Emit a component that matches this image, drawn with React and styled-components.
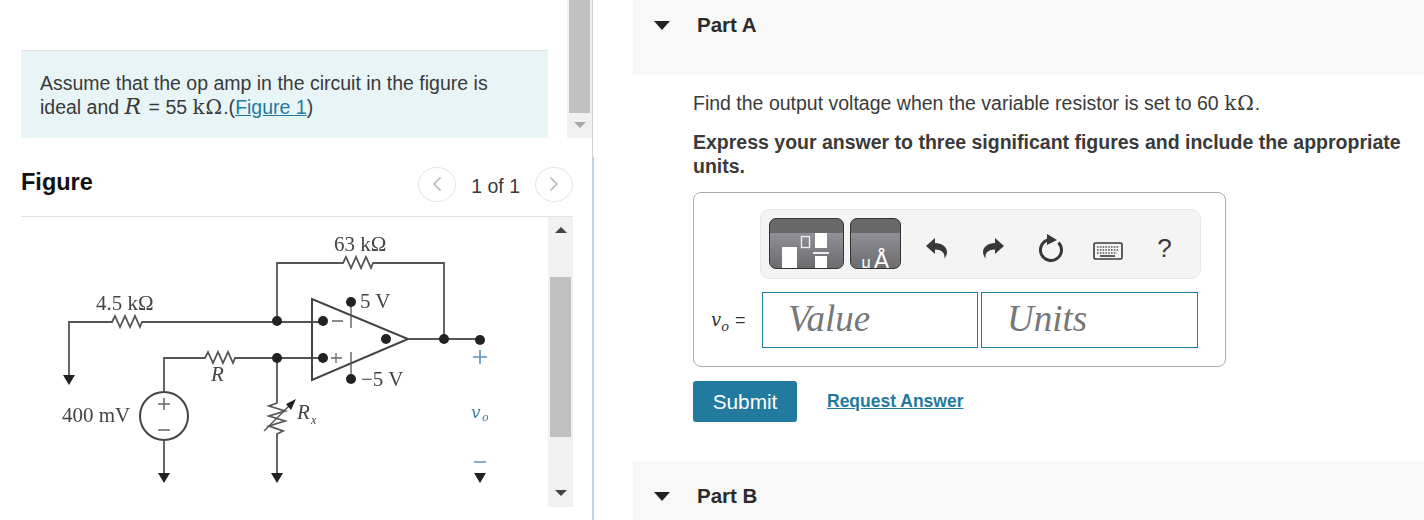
import React from 'react';
import styled, { createGlobalStyle } from 'styled-components';
import { ChevronLeft, ChevronRight } from 'lucide-react';

const GlobalStyle = createGlobalStyle`
  html, body {
    margin: 0;
    padding: 0;
    background: #fff;
  }
  body {
    font-family: "Liberation Sans", Arial, sans-serif;
    color: #333;
    overflow: hidden;
  }
`;

const Page = styled.div`
  display: flex;
  width: 1424px;
  height: 520px;
  overflow: hidden;
`;

const LeftPane = styled.div`
  display: flex;
  flex-direction: column;
  width: 594px;
  flex-shrink: 0;
`;

const TopRow = styled.div`
  display: flex;
  height: 157px;
  width: 593px;
  box-sizing: border-box;
  border-right: 1px solid #ccc;
`;

const Statement = styled.div`
  box-sizing: border-box;
  width: 528px;
  height: 88px;
  margin: 50px 19px 0 21px;
  padding: 20px 19px 0;
  background: #e8f5f6;
  border-top: 1px solid #e0e0e0;
  font-size: 19.5px;
  line-height: 24px;
  color: #3a3a3a;
`;

const Math = styled.span`
  font-family: "DejaVu Serif", "Liberation Serif", serif;
  font-size: ${(p) => p.$size || 20}px;
  line-height: 20px;
  letter-spacing: ${(p) => (p.$italic ? 2 : 1)}px;
  font-style: ${(p) => (p.$italic ? 'italic' : 'normal')};
`;

const TextLink = styled.a`
  color: #1f7a9e;
  text-decoration: underline;
  font-weight: ${(p) => (p.$bold ? 700 : 400)};
`;

const ScrollTrack = styled.div`
  display: flex;
  flex-direction: column;
  align-items: center;
  box-sizing: border-box;
  width: 25px;
  height: ${(p) => p.$height}px;
  background: #f1f1f1;
  flex-shrink: 0;
`;

const ScrollThumb = styled.div`
  width: 21px;
  height: ${(p) => p.$height}px;
  margin-top: ${(p) => p.$top || 0}px;
  background: #c1c1c1;
`;

const ScrollArrow = styled.div`
  width: 0;
  height: 0;
  border-left: 6px solid transparent;
  border-right: 6px solid transparent;
  margin-top: ${(p) => p.$top || 0}px;
  ${(p) => (p.$up ? `border-bottom: 6px solid ${p.$color};` : `border-top: 6px solid ${p.$color};`)}
`;

const FigurePane = styled.div`
  flex: 1;
  border-right: 2px solid #c3d2e4;
`;

const FigureHeader = styled.div`
  display: flex;
  align-items: center;
  box-sizing: border-box;
  height: 60px;
  width: 552px;
  margin-left: 21px;
  border-bottom: 1px solid #e2e2e2;
`;

const FigureTitle = styled.h2`
  flex: 1;
  margin: 0 0 9px;
  font-size: 23.5px;
  font-weight: 700;
  color: #111;
`;

const Pager = styled.div`
  display: flex;
  align-items: center;
  gap: 15px;
  margin-bottom: 5px;
`;

const PagerButton = styled.div`
  display: flex;
  align-items: center;
  justify-content: center;
  box-sizing: border-box;
  width: 38px;
  height: 35px;
  border: 1px solid #e6e6e6;
  border-radius: 50%;
  color: #c4c4c4;
`;

const PagerText = styled.span`
  margin-top: 4px;
  font-size: 19.5px;
  color: #3a3a3a;
`;

const FigureRow = styled.div`
  display: flex;
  margin-left: 21px;
`;

const Circuit = styled.svg`
  display: block;
  width: 527px;
  height: 290px;
  filter: blur(0.45px);
  flex-shrink: 0;
`;

const RightPane = styled.div`
  flex: 1;
  margin-left: 39px;
`;

const PartHeader = styled.div`
  display: flex;
  align-items: flex-start;
  height: ${(p) => p.$height}px;
  padding-top: ${(p) => p.$pad}px;
  box-sizing: border-box;
  background: #f8f8f8;
`;

const Caret = styled.div`
  width: 0;
  height: 0;
  margin: 8px 27px 0 21px;
  border-left: 8px solid transparent;
  border-right: 8px solid transparent;
  border-top: 9px solid #222;
`;

const PartTitle = styled.div`
  font-size: 20.5px;
  line-height: 24px;
  font-weight: 700;
  color: #2b2b2b;
`;

const PartBody = styled.div`
  padding: 16px 0 39px 60px;
`;

const Paragraph = styled.p`
  margin: 0 0 15px;
  width: 720px;
  font-size: 19.5px;
  line-height: 24px;
  color: #3a3a3a;
  font-weight: ${(p) => (p.$bold ? 700 : 400)};
`;

const AnswerCard = styled.div`
  box-sizing: border-box;
  width: 533px;
  height: 175px;
  margin-top: -1px;
  padding: 16px 24px 0 66px;
  border: 1px solid #aaa;
  border-radius: 8px;
`;

const Toolbar = styled.div`
  display: flex;
  align-items: flex-start;
  box-sizing: border-box;
  width: 441px;
  height: 70px;
  padding: 8px 0 0 8px;
  background: #f4f4f4;
  border: 1px solid #e6e6e6;
  border-radius: 10px;
`;

const TemplateButton = styled.div`
  box-sizing: border-box;
  width: ${(p) => p.$width}px;
  height: 51px;
  margin-right: 6px;
  border: 1px solid #333;
  border-radius: 7px;
  overflow: hidden;
  background: linear-gradient(#686868 0, #686868 14px, #918f98 14px, #6c6c6e 100%);
  color: #fff;
`;

const TemplateArt = styled.svg`
  display: block;
`;

const UnitGlyphs = styled.div`
  display: flex;
  align-items: flex-end;
  justify-content: center;
  height: 49px;
  gap: 3px;
  font-family: "Liberation Sans", sans-serif;
  line-height: 1;
`;

const MicroGlyph = styled.span`
  font-size: 16px;
  margin-bottom: -3px;
`;

const AngstromGlyph = styled.span`
  font-size: 24px;
  margin-bottom: -5px;
`;

const ToolIcons = styled.div`
  display: flex;
  align-items: center;
  height: 60px;
  margin-left: 1px;
`;

const ToolIcon = styled.div`
  display: flex;
  align-items: center;
  justify-content: center;
  width: 57px;
  margin-top: ${(p) => p.$shift || 0}px;
  color: #383838;
  font-size: 26px;
`;

const ReplyArrow = styled.svg`
  display: block;
  transform: ${(p) => (p.$flip ? 'scaleX(-1)' : 'none')};
`;

const InputRow = styled.div`
  display: flex;
  align-items: center;
  margin: 13px 0 0 -49px;
`;

const InputLabel = styled.div`
  display: flex;
  align-items: baseline;
  width: 51px;
  font-size: 18px;
  color: #333;
  white-space: nowrap;
`;

const Variable = styled.span`
  margin-right: 6px;
  font-family: "DejaVu Serif", "Liberation Serif", serif;
  font-style: italic;
  font-size: 18px;
`;

const Sub = styled.sub`
  font-size: 13px;
  line-height: 0;
`;

const ValueBox = styled.div`
  box-sizing: border-box;
  width: ${(p) => p.$width}px;
  height: 56px;
  margin-right: 3px;
  padding-left: 25px;
  border: 1px solid #217a9e;
  font-family: "Liberation Serif", "Times New Roman", serif;
  font-style: italic;
  font-size: 37px;
  line-height: 52px;
  color: #777;
`;

const Actions = styled.div`
  display: flex;
  align-items: center;
  gap: 30px;
  margin-top: 14px;
`;

const SubmitButton = styled.button`
  width: 104px;
  height: 41px;
  padding: 0;
  border: none;
  border-radius: 3px;
  background: #227a9e;
  color: #fff;
  font-family: inherit;
  font-size: 20.8px;
`;

const RequestLink = styled(TextLink)`
  font-size: 17.5px;
`;

const Wires = ({ d, w = 1.8, c = '#555' }) => (
  <path d={d} fill="none" stroke={c} strokeWidth={w} />
);

const Dot = ({ x, y }) => <circle cx={x} cy={y} r="5" fill="#222" />;

const Ground = ({ x, y, c = '#222' }) => (
  <polygon points={`${x - 6},${y} ${x + 6},${y} ${x},${y + 10}`} fill={c} />
);

const Label = ({ x, y, children, italic, size = 21, c = '#444', family = '"Liberation Serif", serif' }) => (
  <text
    x={x}
    y={y}
    fontFamily={family}
    fontSize={size}
    fontStyle={italic ? 'italic' : 'normal'}
    fill={c}
  >
    {children}
  </text>
);

// relative zig-zag of a horizontal resistor
const ZIG = 'l3 -6 l5 11 l5 -11 l5 11 l5 -11 l5 11 l2 -5';

const CircuitDrawing = () => (
  <Circuit viewBox="21 217 527 290">
    {/* feedback loop */}
    <Wires d={`M277 321 V263 H343 ${ZIG} H444 V339`} />
    {/* inverting input */}
    <Wires d={`M69 376 V322 H112 ${ZIG} H322`} />
    {/* non inverting input */}
    <Wires d={`M164 392 V358 H205 ${ZIG} H322`} />
    {/* Rx branch */}
    <Wires d="M277 358 V403 l-8 3 l16 5 l-16 5 l16 5 l-16 5 l14 5 l-6 3 V474" />
    <Wires d="M264 431 L292 403" w={1.4} />
    <polygon points="296,399 286,404 291,410" fill="#222" />
    {/* source */}
    <circle cx="164" cy="416" r="24" fill="none" stroke="#444" strokeWidth="2" />
    <Wires d="M164 440 V474" />
    <Wires d="M158 404 H170 M164 398 V410 M158 430 H170" w={1.5} c="#666" />
    {/* op amp */}
    <polygon points="312,299 312,380 408,339" fill="none" stroke="#444" strokeWidth="2" />
    <Wires d="M408 339 H480" />
    <Wires d="M351 302 V328 M351 352 V379" w={1.3} />
    <Wires d="M332 321 H343 M336 353 V363 M331 358 H342" w={1.3} c="#666" />
    <Dot x={277} y={321} />
    <Dot x={323} y={321} />
    <Dot x={277} y={358} />
    <Dot x={323} y={358} />
    <Dot x={386} y={339} />
    <Dot x={444} y={339} />
    <Dot x={480} y={340} />
    <Dot x={351} y={302} />
    <Dot x={351} y={379} />
    <Ground x={69} y={375} />
    <Ground x={164} y={473} />
    <Ground x={277} y={473} />
    <Ground x={480} y={473} />
    <Label x={334} y={251}>63 kΩ</Label>
    <Label x={96} y={310}>4.5 kΩ</Label>
    <Label x={62} y={422}>400 mV</Label>
    <Label x={360} y={308}>5 V</Label>
    <Label x={361} y={386}>−5 V</Label>
    <Label x={211} y={381} italic>R</Label>
    <Label x={297} y={419} italic>R</Label>
    <Label x={311} y={424} italic size={12}>x</Label>
    <Wires d="M473 357 H487 M480 350 V364 M474 462 H486" w={1.6} c="#5b93b5" />
    <Label x={471} y={418} italic size={17} c="#3f80a4" family='"DejaVu Serif", serif'>v</Label>
    <Label x={482} y={421} italic size={11} c="#3f80a4" family='"DejaVu Serif", serif'>o</Label>
  </Circuit>
);

const ReplyIcon = ({ flip }) => (
  <ReplyArrow $flip={flip} width="21" height="22" viewBox="0 0 21 22">
    <path
      d="M0 9 L9 1 V6 C16 6 21 10 21 15 C21 17.5 20 19.5 18.5 21.5 C19 17 17 12.5 9 12.5 V17 Z"
      fill="#383838"
    />
  </ReplyArrow>
);

const ResetIcon = () => (
  <svg width="26" height="30" viewBox="0 0 26 30">
    <path d="M20.4 9.6 A10.5 10.5 0 1 1 11 6.7" fill="none" stroke="#383838" strokeWidth="3" />
    <polygon points="9,1 19,7 9,12" fill="#383838" />
  </svg>
);

const KeyboardIcon = () => (
  <svg width="30" height="18" viewBox="0 0 30 18">
    <rect x="1" y="1" width="28" height="16" rx="1.5" fill="none" stroke="#383838" strokeWidth="1.6" />
    <path
      d="M4 5 H26 M4 8 H26 M4 11 H24"
      stroke="#555"
      strokeWidth="1.6"
      strokeDasharray="1.6 1.2"
      fill="none"
    />
    <path d="M7 14 H22" stroke="#383838" strokeWidth="1.6" />
  </svg>
);

const App = () => {
  return (
    <Page>
      <GlobalStyle />
      <LeftPane>
        <TopRow>
          <Statement>
            Assume that the op amp in the circuit in the figure is ideal and{' '}
            <Math $italic $size={22}>R</Math> = 55 <Math>kΩ</Math>.(<TextLink>Figure 1</TextLink>)
          </Statement>
          <ScrollTrack $height={138}>
            <ScrollThumb $height={113} />
            <ScrollArrow $top={9} $color="#a8a8a8" />
          </ScrollTrack>
        </TopRow>
        <FigurePane>
          <FigureHeader>
            <FigureTitle>Figure</FigureTitle>
            <Pager>
              <PagerButton><ChevronLeft size={24} strokeWidth={1.8} /></PagerButton>
              <PagerText>1 of 1</PagerText>
              <PagerButton><ChevronRight size={24} strokeWidth={1.8} /></PagerButton>
            </Pager>
          </FigureHeader>
          <FigureRow>
            <CircuitDrawing />
            <ScrollTrack $height={290}>
              <ScrollArrow $up $top={10} $color="#444" />
              <ScrollThumb $height={160} $top={44} />
              <ScrollArrow $top={53} $color="#444" />
            </ScrollTrack>
          </FigureRow>
        </FigurePane>
      </LeftPane>
      <RightPane>
        <PartHeader $height={75} $pad={13}>
          <Caret />
          <PartTitle>Part A</PartTitle>
        </PartHeader>
        <PartBody>
          <Paragraph>
            Find the output voltage when the variable resistor is set to 60 <Math>kΩ</Math>.
          </Paragraph>
          <Paragraph $bold>
            Express your answer to three significant figures and include the appropriate units.
          </Paragraph>
          <AnswerCard>
            <Toolbar>
              <TemplateButton $width={75}>
                <TemplateArt width="73" height="49" viewBox="0 0 73 49">
                  <rect x="12" y="28" width="15" height="21" fill="#fff" />
                  <rect x="31.5" y="17.5" width="8" height="11" fill="none" stroke="#eee" strokeWidth="1.4" />
                  <rect x="45" y="14" width="12" height="15" fill="#fff" />
                  <rect x="43" y="33" width="16" height="2" fill="#eee" />
                  <rect x="45" y="37" width="12" height="12" fill="#fff" />
                </TemplateArt>
              </TemplateButton>
              <TemplateButton $width={51}>
                <UnitGlyphs>
                  <MicroGlyph>μ</MicroGlyph>
                  <AngstromGlyph>Å</AngstromGlyph>
                </UnitGlyphs>
              </TemplateButton>
              <ToolIcons>
                <ToolIcon><ReplyIcon /></ToolIcon>
                <ToolIcon><ReplyIcon flip /></ToolIcon>
                <ToolIcon><ResetIcon /></ToolIcon>
                <ToolIcon $shift={6}><KeyboardIcon /></ToolIcon>
                <ToolIcon>?</ToolIcon>
              </ToolIcons>
            </Toolbar>
            <InputRow>
              <InputLabel>
                <Variable>v<Sub>o</Sub></Variable> =
              </InputLabel>
              <ValueBox $width={216}>Value</ValueBox>
              <ValueBox $width={217}>Units</ValueBox>
            </InputRow>
          </AnswerCard>
          <Actions>
            <SubmitButton>Submit</SubmitButton>
            <RequestLink $bold>Request Answer</RequestLink>
          </Actions>
        </PartBody>
        <PartHeader $height={59} $pad={23}>
          <Caret />
          <PartTitle>Part B</PartTitle>
        </PartHeader>
      </RightPane>
    </Page>
  );
};

export default App;
